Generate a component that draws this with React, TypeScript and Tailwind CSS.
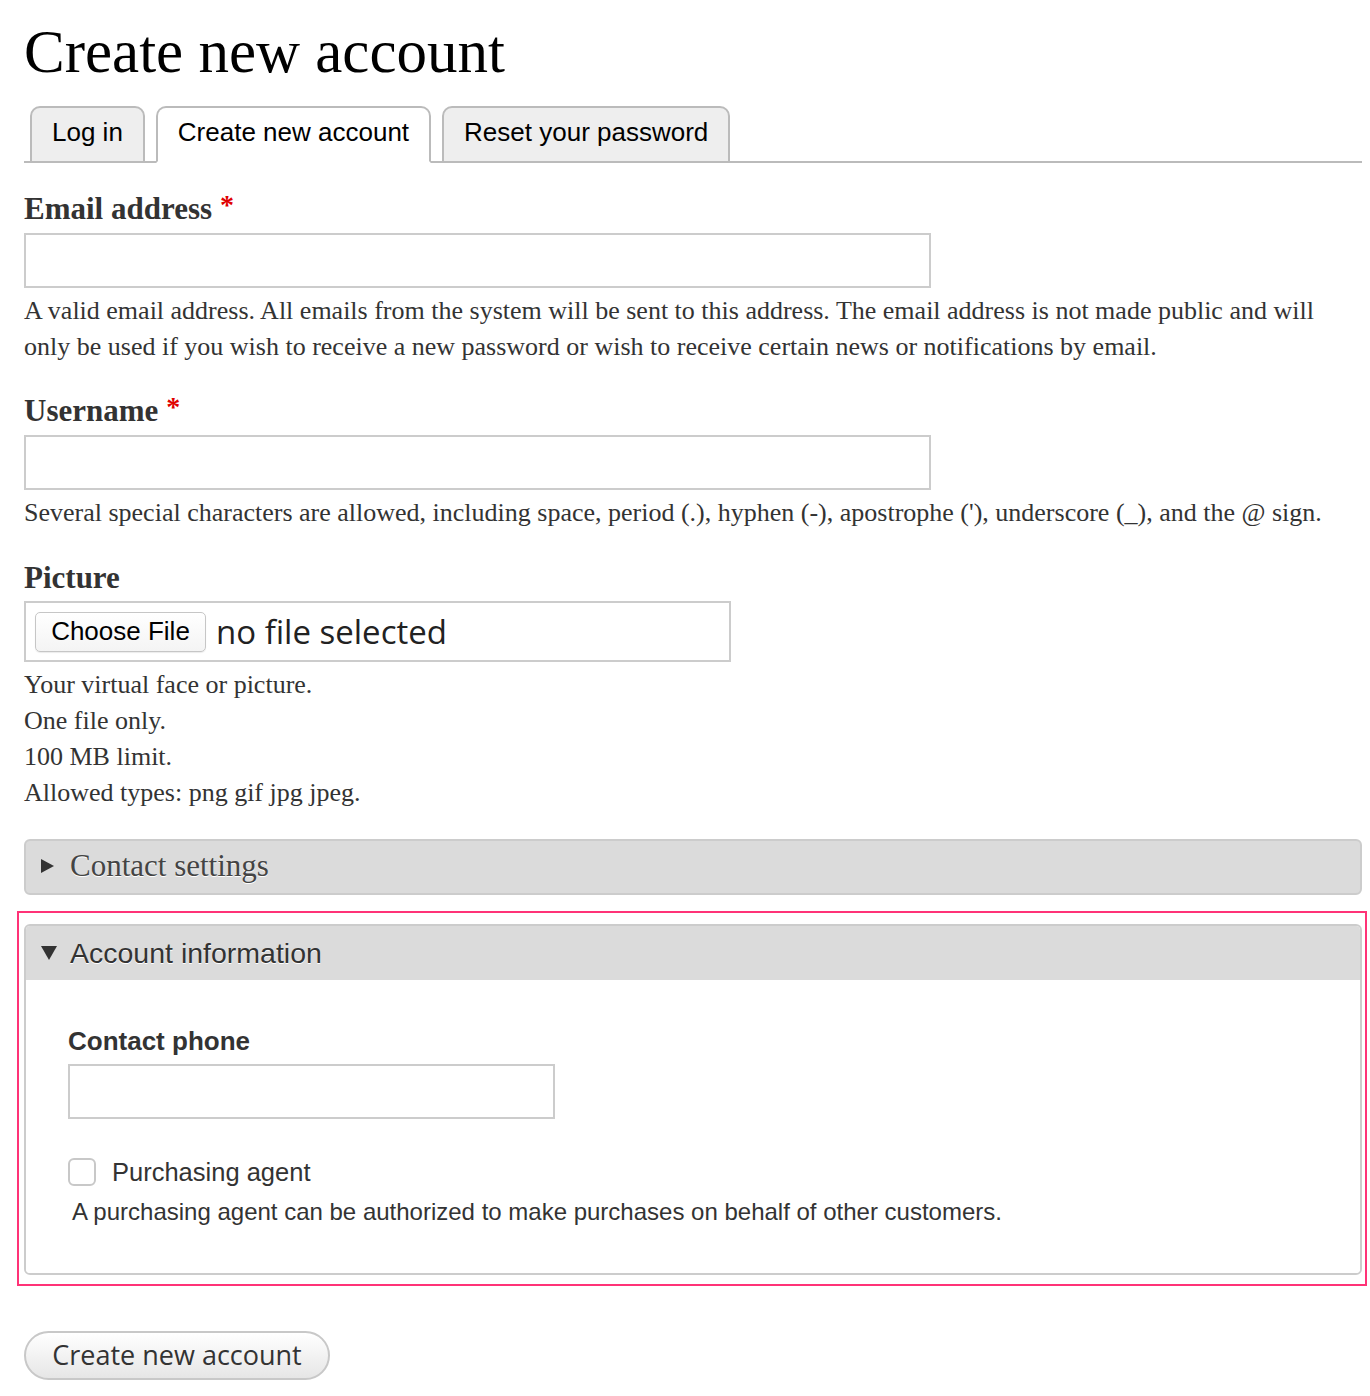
import React from 'react';

const serif = "font-['Liberation_Serif',serif]";
const sans = "font-['Liberation_Sans',Arial,sans-serif]";

const Required = () => (
  <span className="ml-[8px] align-top text-[28px] leading-none text-[#e00000]">*</span>
);

const Tab: React.FC<{ label: string; active?: boolean }> = ({ label, active }) => (
  <div
    className={`-mb-[2px] flex h-[57px] items-center rounded-t-[10px] border-2 border-[#bbb] px-[20px] pb-[5px] text-[26px] text-black ${sans} ${
      active ? 'border-b-white bg-white' : 'bg-[#eee]'
    }`}
  >
    {label}
  </div>
);

const Triangle: React.FC<{ down?: boolean }> = ({ down }) =>
  down ? (
    <svg width="18" height="16" viewBox="0 0 18 16" className="mr-[12px]">
      <path d="M1 1h16L9 15z" fill="#333" />
    </svg>
  ) : (
    <svg width="15" height="16" viewBox="0 0 15 16" className="mr-[15px]">
      <path d="M1 1l13 7-13 7z" fill="#333" />
    </svg>
  );

export default function App() {
  return (
    <div className="min-h-[1396px] bg-white pl-[24px] text-[#333]">
      <div className="w-[1338px]">
        <h1 className={`pt-[18px] text-[61px] leading-[68px] text-black ${serif}`}>Create new account</h1>

        {/* Tabs */}
        <div className="mt-[20px] flex gap-[11px] border-b-2 border-[#bbb] pl-[6px]">
          <Tab label="Log in" />
          <Tab label="Create new account" active />
          <Tab label="Reset your password" />
        </div>

        {/* Email */}
        <div className="mt-[28px]">
          <label className={`block text-[31px] font-bold leading-[36px] ${serif}`}>
            Email address
            <Required />
          </label>
          <div className="mt-[6px] h-[55px] w-[907px] border-2 border-[#ccc] bg-white" />
          <p className={`mt-[5px] text-[26px] leading-[36px] ${serif}`}>
            A valid email address. All emails from the system will be sent to this address. The email address is not made public and will only be used if you wish to receive a new password or wish to receive certain news or notifications by email.
          </p>
        </div>

        {/* Username */}
        <div className="mt-[28px]">
          <label className={`block text-[31px] font-bold leading-[36px] ${serif}`}>
            Username
            <Required />
          </label>
          <div className="mt-[6px] h-[55px] w-[907px] border-2 border-[#ccc] bg-white" />
          <p className={`mt-[5px] text-[26px] leading-[36px] ${serif}`}>
            Several special characters are allowed, including space, period (.), hyphen (-), apostrophe ('), underscore (_), and the @ sign.
          </p>
        </div>

        {/* Picture */}
        <div className="mt-[29px]">
          <label className={`block text-[31px] font-bold leading-[36px] ${serif}`}>Picture</label>
          <div className="mt-[5px] flex h-[61px] w-[707px] items-center border-2 border-[#ccc] bg-white pl-[9px]">
            <div
              className={`flex h-[40px] w-[171px] items-center justify-center rounded-[5px] border border-[#c6c6c6] bg-gradient-to-b from-white to-[#f4f4f4] text-[26px] text-black shadow-[0_1px_1px_rgba(0,0,0,0.08)] ${sans}`}
            >
              Choose File
            </div>
            <span className="ml-[10px] font-['Open_Sans',sans-serif] text-[33px] leading-none text-[#222]">
              no file selected
            </span>
          </div>
          <div className={`mt-[5px] text-[26px] leading-[36px] ${serif}`}>
            <p>Your virtual face or picture.</p>
            <p>One file only.</p>
            <p>100 MB limit.</p>
            <p>Allowed types: png gif jpg jpeg.</p>
          </div>
        </div>

        {/* Contact settings (collapsed) */}
        <div className="mt-[28px] flex h-[56px] items-center rounded-[6px] border-2 border-[#ccc] bg-[#dbdbdb] pl-[14px] pb-[2px]">
          <Triangle />
          <span className={`text-[31px] text-[#444] [text-shadow:0_1px_0_#fff] ${serif}`}>Contact settings</span>
        </div>

        {/* Account information (open, highlighted) */}
        <div className="mt-[16px] -ml-[7px] -mr-[5px] border-2 border-[#ff3377] pb-[9px] pl-[5px] pr-[3px] pt-[11px]">
          <div className="overflow-hidden rounded-[6px] border-2 border-[#ccc]">
            <div className="flex h-[54px] items-center bg-[#dbdbdb] pl-[14px]">
              <Triangle down />
              <span className={`text-[28.5px] text-[#333] [text-shadow:0_1px_0_#fff] ${sans}`}>Account information</span>
            </div>
            <div className={`bg-white pb-[45px] pl-[42px] pt-[43px] ${sans}`}>
              <label className="block text-[26px] font-bold leading-[36px] text-[#333]">Contact phone</label>
              <div className="mt-[5px] h-[55px] w-[487px] border-2 border-[#ccc] bg-white" />
              <div className="mt-[37px] flex items-center">
                <div className="h-[28px] w-[28px] rounded-[6px] border-2 border-[#c8c8c8] bg-white" />
                <span className="ml-[16px] text-[25.5px] leading-[32px] text-[#333]">Purchasing agent</span>
              </div>
              <p className="ml-[4px] mt-[8px] text-[24px] leading-[32px] text-[#333]">
                A purchasing agent can be authorized to make purchases on behalf of other customers.
              </p>
            </div>
          </div>
        </div>

        {/* Submit */}
        <button
          type="button"
          className="mt-[45px] flex h-[49px] w-[306px] items-center justify-center rounded-full border-2 border-[#c8c8c8] bg-gradient-to-b from-white to-[#e6e6e6] font-['Open_Sans',sans-serif] text-[27px] text-[#333]"
        >
          Create new account
        </button>
      </div>
    </div>
  );
}
